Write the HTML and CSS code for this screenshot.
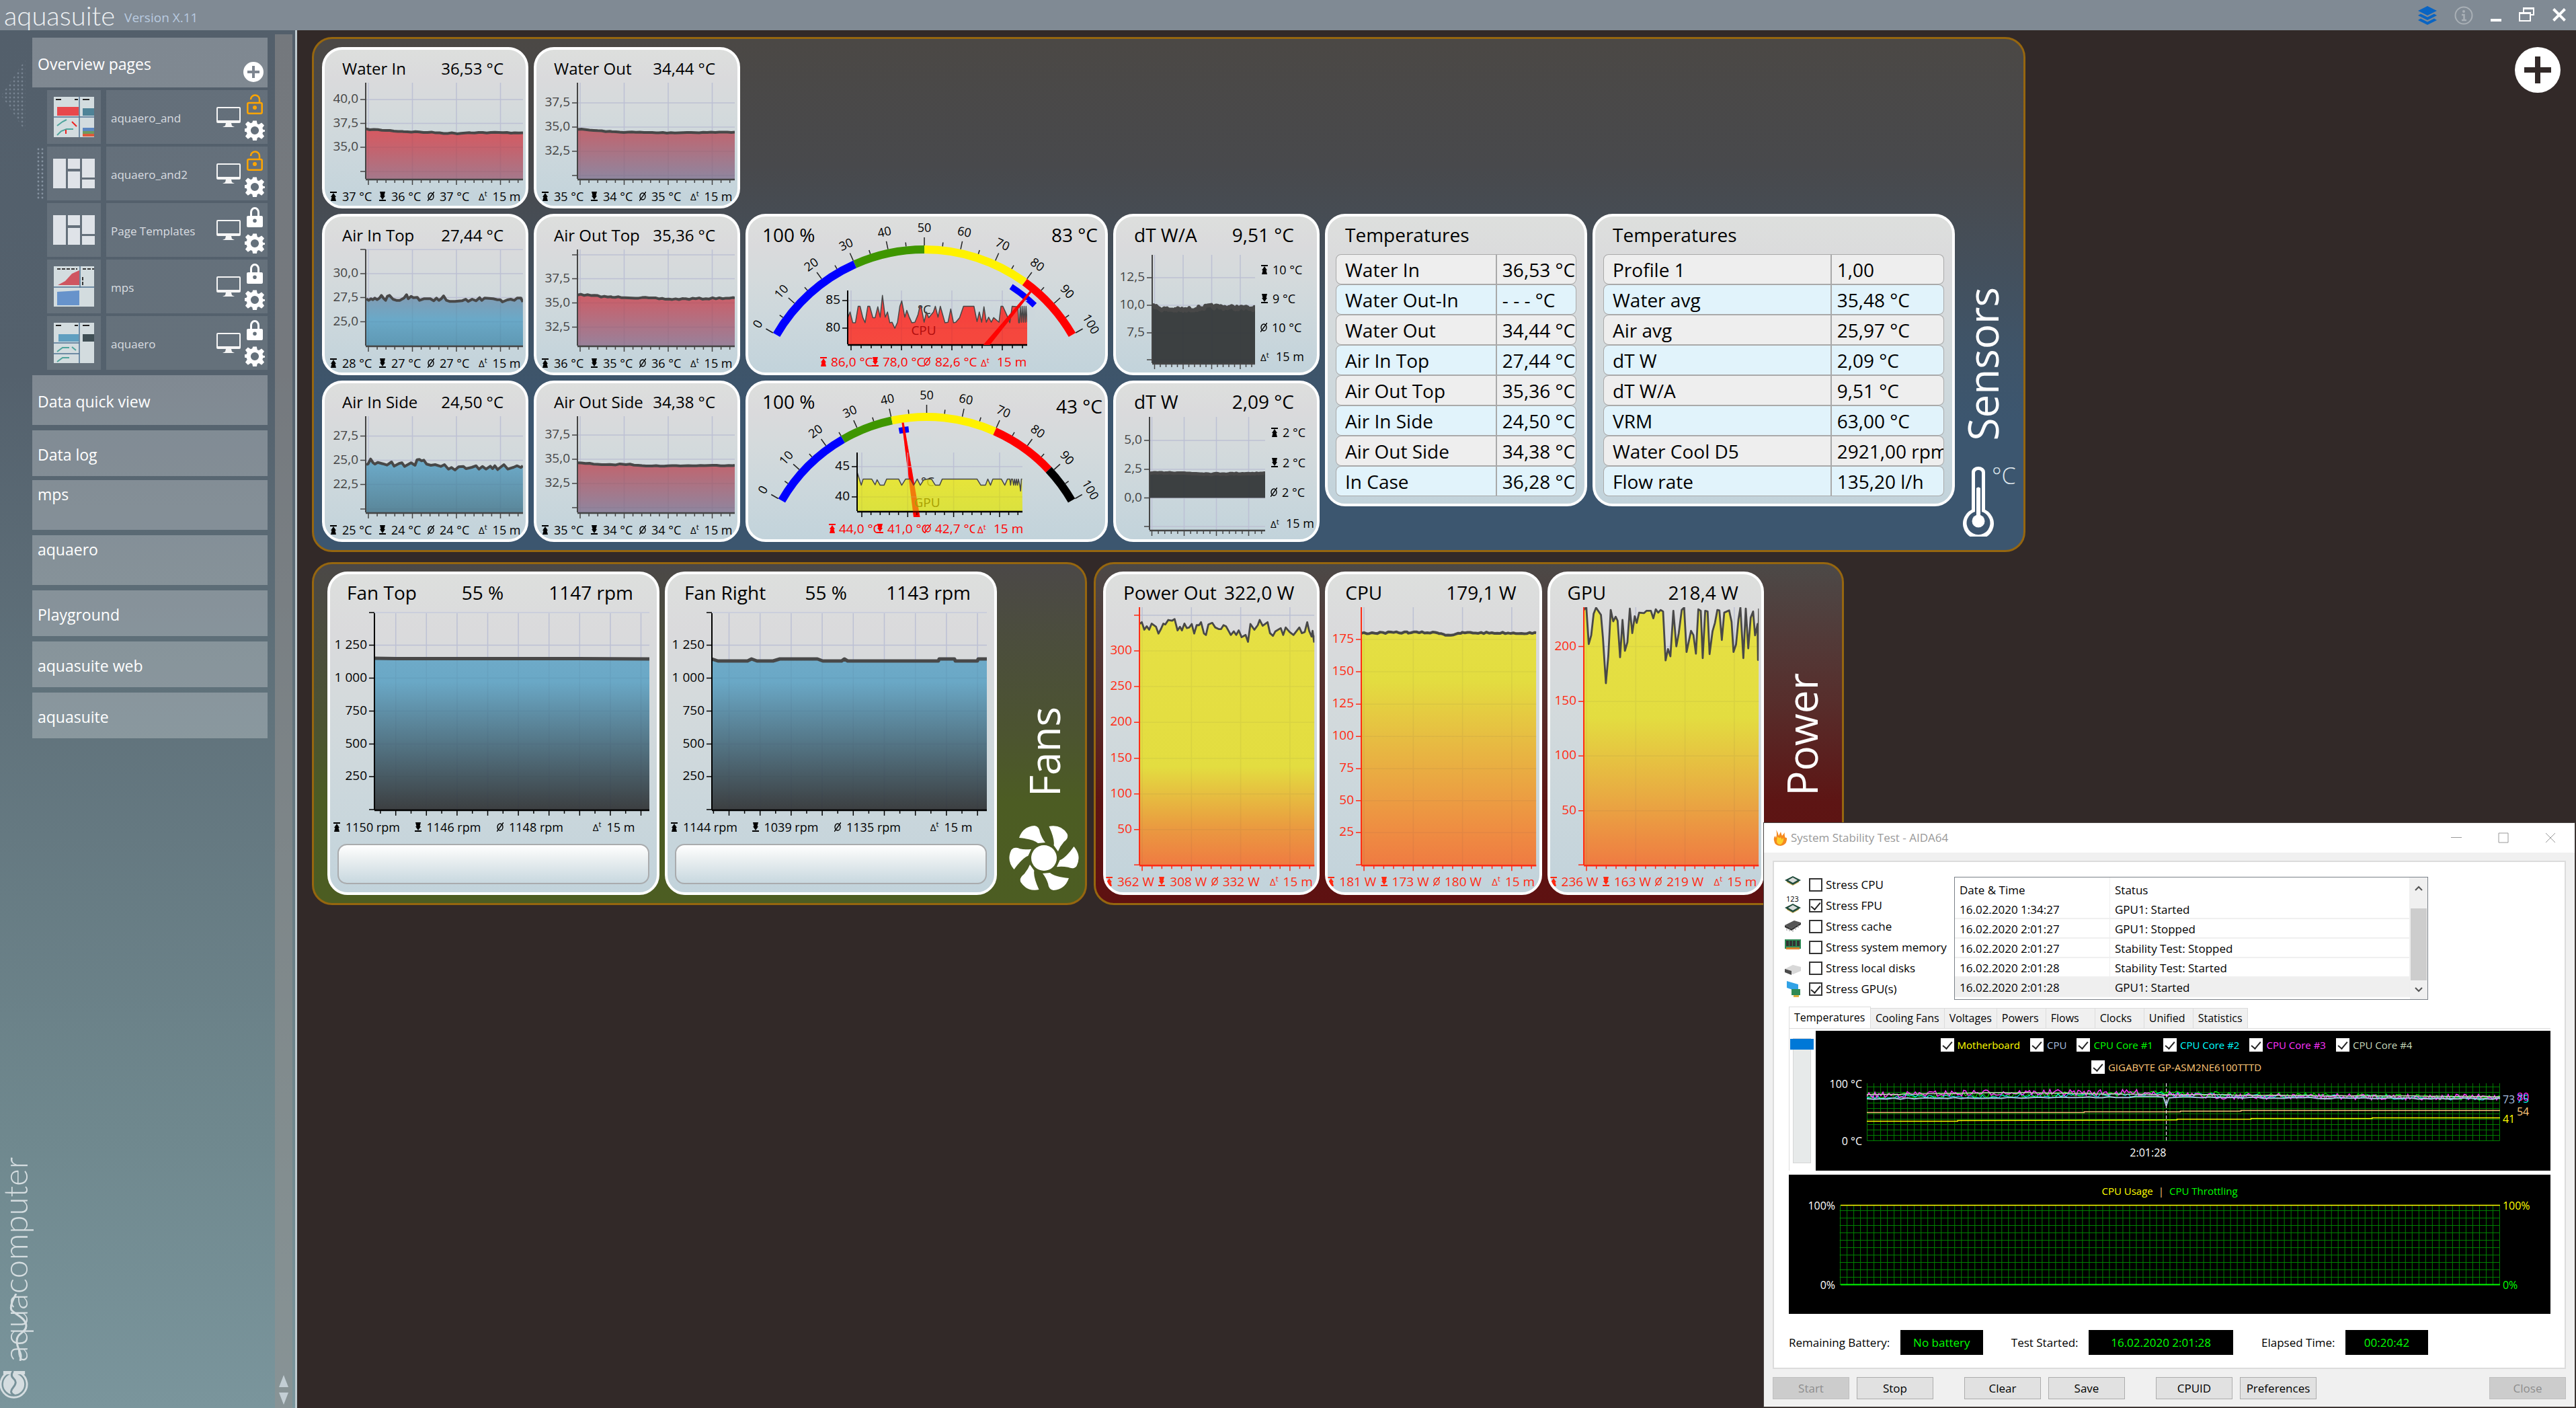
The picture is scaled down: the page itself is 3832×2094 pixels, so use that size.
FILE: index.html
```html
<!DOCTYPE html>
<html lang="en">
<head>
<meta charset="utf-8">
<title>aquasuite X.11</title>
<link rel="stylesheet" href="styles.css">
</head>
<body>
<svg class="defs" aria-hidden="true">
  <defs>
    <symbol id="i-max" viewBox="0 0 10 14"><path d="M0 0h10v2H0zM5 2l4 6H7.500l1.500 6h-8l1.500-6H1z"/></symbol>
    <symbol id="i-min" viewBox="0 0 10 14"><path d="M0 12h10v2H0zM1 0h8L7.500 6H9l-4 6-4-6h1.500z"/></symbol>
    <symbol id="i-avg" viewBox="0 0 10 14"><ellipse cx="5" cy="7" rx="4" ry="5" fill="none" stroke="currentColor" stroke-width="1.400"/><path d="M0 14L10 0" stroke="currentColor" stroke-width="1.400"/></symbol>
    <symbol id="i-gear" viewBox="-16 -16 32 32">
      <path fill-rule="evenodd" d="M-3-15.500h6l1 5 2.500 1 4.300-2.900 4.200 4.300-2.900 4.100 1 2.600 5 .9v-2 4l-5 1-1 2.500 2.900 4.300-4.200 4.200-4.300-2.900-2.500 1-1 5h-6l-1-5-2.500-1-4.300 2.900-4.200-4.200 2.900-4.300-1-2.500-5-1v-4l5-1 1-2.500-2.900-4.200 4.200-4.300 4.300 2.900 2.500-1zM0-6.500a6.500 6.500 0 1 0 0 13 6.500 6.500 0 1 0 0-13z"/>
    </symbol>
    <symbol id="i-screen" viewBox="0 0 36 30"><path fill-rule="evenodd" d="M2 0h32q2 0 2 2v20q0 2-2 2H2q-2 0-2-2V2q0-2 2-2zM2 2v18h32V2zM14 24h8l1 4 4 2H9l4-2z"/></symbol>
    <symbol id="i-locked" viewBox="0 0 24 30"><path fill-rule="evenodd" d="M5 13V8a7 8 0 0 1 14 0v5h3q2 0 2 2v13q0 2-2 2H2q-2 0-2-2V15q0-2 2-2zM8 13h8V8a4 5 0 0 0-8 0zM12 17.500a2.800 2.800 0 1 0 0 5.600 2.800 2.800 0 1 0 0-5.600z"/></symbol>
    <symbol id="i-open" viewBox="0 0 24 30"><path d="M6 8a6.500 6.500 0 0 1 13 0v6" fill="none" stroke="currentColor" stroke-width="2.500"/><rect x="1.300" y="13" width="21.400" height="15.700" rx="2" fill="none" stroke="currentColor" stroke-width="2.500"/><circle cx="12" cy="20" r="3"/></symbol>
    <symbol id="i-tiles" viewBox="0 0 62 44"><path d="M0 0h19v44H0zM22 0h18v15H22zM22 19h18v25H22zM43 0h19v28H43zM43 31h19v13H43z"/></symbol>
    <symbol id="i-chip" viewBox="0 0 24 14"><path d="M3 7l9 6 9-6v2l-9 5-9-5z" fill="#c9a646"/><path d="M0 6l12-6 12 6-12 7z" fill="#1f4a3a"/><path d="M5 6l7-4 7 4-7 4z" fill="#d8dcda"/></symbol>
  </defs>
</svg>

<header class="topbar">
  <h1 class="brand">aquasuite</h1>
  <span class="version">Version X.11</span>
  <div class="window-tools">
    <button aria-label="Layers"><svg width="28" height="28" viewBox="0 0 28 28" fill="#0a64c2"><path d="M14 0l14 7-14 7L0 7zM4 11.500l10 5 10-5 4 2.500-14 7L0 14zM4 18.500l10 5 10-5 4 2.500-14 7L0 21z"/></svg></button>
    <button aria-label="Info"><svg width="28" height="28" viewBox="0 0 28 28" fill="none" stroke="#a9b0b6" stroke-width="2"><circle cx="14" cy="14" r="12.500"/><circle cx="14" cy="8" r="1" fill="#a9b0b6"/><path d="M11 13h3.500v7.500M11 21h7" stroke-width="2.500"/></svg></button>
    <button aria-label="Minimize"><svg width="16" height="28" viewBox="0 0 16 28" fill="#fff"><path d="M0 19h16v4H0z"/></svg></button>
    <button aria-label="Restore"><svg width="24" height="28" viewBox="0 0 24 28" fill="none" stroke="#fff" stroke-width="2"><path d="M7 9V3h15v10h-5M7 4h15"/><path d="M1 10h16v12H1zM1 11h16"/></svg></button>
    <button aria-label="Close"><svg width="20" height="28" viewBox="0 0 20 28" fill="none" stroke="#fff" stroke-width="4"><path d="M1.500 4.500l17 17M18.500 4.500l-17 17"/></svg></button>
  </div>
</header>

<div class="workspace">
  <aside class="sidebar">
    <div class="gutter">
      <svg class="collapse" viewBox="0 0 38 108" aria-hidden="true">
        <defs><pattern id="dots" width="6" height="6" patternUnits="userSpaceOnUse"><circle cx="3" cy="3" r="1.400" fill="#8592a0"/></pattern></defs>
        <path d="M38 0v108L2 54z" fill="url(#dots)"/>
      </svg>
      <div class="maker">
        <svg viewBox="0 0 44 44" aria-hidden="true"><path d="M10 3.500a20 20 0 1 0 22 0" fill="none" stroke="#d5dde0" stroke-width="3"/><circle cx="21" cy="20" r="16" fill="#d5dde0"/><path d="M5 0h33v5H5z" fill="#d5dde0"/><path d="M20 0q-5 7 1 12t-1 13 2 12" fill="none" stroke="#78929a" stroke-width="3"/></svg>
        <span>aquacomputer</span>
        <svg class="wave" viewBox="0 0 44 100" aria-hidden="true"><path d="M24 0Q14 18 17 24c4 6 22 12 22 24 0 10-14 10-14 22 0 14 9 16 5 30" fill="none" stroke="#d5dde0" stroke-width="3"/></svg>
      </div>
    </div>
    <nav class="menu">
      <div class="entry tall">
        <a href="#overview">Overview pages</a>
        <button class="add-page" aria-label="Add page"><svg viewBox="0 0 30 30"><circle cx="15" cy="15" r="15" fill="#fff"/><path d="M15 6v18M6 15h18" stroke="#7e8690" stroke-width="4"/></svg></button>
      </div>
      <ul class="pages">
        <li>
          <span class="thumb"><svg viewBox="0 0 60 60"><path d="M0 0h60v60H0z" fill="#d3dcdf"/><path d="M5 15h32v13H5z" fill="#e8474c"/><path d="M43 17h17v11H43z" fill="#4f8397"/><path d="M38 0v60M0 30h60" stroke="#4f7292" stroke-width="1.500"/><path d="M43 46h17v6H43z" fill="#5b86c0"/><path d="M43 51h17v4H43z" fill="#6f9a5e"/><path d="M43 55h17v4H43z" fill="#dd5a3c"/><path d="M5 43l8-6 6-3M5 57l6-6 8-3h10" fill="none" stroke="#4fa49c" stroke-width="2"/><path d="M27 37l7 7M18 49v6" stroke="#e22" stroke-width="2"/><path d="M3 4h8M31 4h5M43 4h10" stroke="#222" stroke-width="2"/></svg></span>
          <span class="page"><a href="#p1">aquaero_and</a><svg class="screen"><use href="#i-screen"/></svg><span class="tools"><button class="unlocked" aria-label="Lock page"><svg width="24" height="30"><use href="#i-open"/></svg></button><button aria-label="Page settings"><svg width="30" height="30"><use href="#i-gear"/></svg></button></span></span>
        </li>
        <li>
          <svg class="grip" viewBox="0 0 12 78" aria-hidden="true"><path d="M0 0h12v78H0z" fill="url(#dots)"/></svg>
          <span class="thumb"><svg class="tiles"><use href="#i-tiles"/></svg></span>
          <span class="page"><a href="#p2">aquaero_and2</a><svg class="screen"><use href="#i-screen"/></svg><span class="tools"><button class="unlocked" aria-label="Lock page"><svg width="24" height="30"><use href="#i-open"/></svg></button><button aria-label="Page settings"><svg width="30" height="30"><use href="#i-gear"/></svg></button></span></span>
        </li>
        <li>
          <span class="thumb"><svg class="tiles"><use href="#i-tiles"/></svg></span>
          <span class="page"><a href="#p3">Page Templates</a><svg class="screen"><use href="#i-screen"/></svg><span class="tools"><button aria-label="Unlock page"><svg width="24" height="30"><use href="#i-locked"/></svg></button><button aria-label="Page settings"><svg width="30" height="30"><use href="#i-gear"/></svg></button></span></span>
        </li>
        <li>
          <span class="thumb"><svg viewBox="0 0 60 60"><path d="M0 0h60v60H0z" fill="#d3dcdf"/><path d="M6 28l11-6 10-11 11-5v22z" fill="#cf5560"/><path d="M5 38l33-2v22H5z" fill="#6793cb"/><path d="M39 0v32M0 31h60" stroke="#4f7292" stroke-width="1.500"/><path d="M5 4h30M43 4h17M43 16v12" stroke="#333" stroke-width="2" stroke-dasharray="5 2"/></svg></span>
          <span class="page"><a href="#p4">mps</a><svg class="screen"><use href="#i-screen"/></svg><span class="tools"><button aria-label="Unlock page"><svg width="24" height="30"><use href="#i-locked"/></svg></button><button aria-label="Page settings"><svg width="30" height="30"><use href="#i-gear"/></svg></button></span></span>
        </li>
        <li>
          <span class="thumb"><svg viewBox="0 0 60 60"><path d="M0 0h60v60H0z" fill="#d3dcdf"/><path d="M7 17h30v11H7z" fill="#5f9fc0"/><path d="M43 17h17v11H43z" fill="#3f4f55"/><path d="M38 0v60M0 30h38M0 46h38" stroke="#4f7292" stroke-width="1.500"/><path d="M5 43l8-6h10M27 36l6 5M5 58l8-6h10" fill="none" stroke="#4fa49c" stroke-width="2"/><path d="M3 4h8M31 4h5M43 4h10" stroke="#222" stroke-width="2"/></svg></span>
          <span class="page"><a href="#p5">aquaero</a><svg class="screen"><use href="#i-screen"/></svg><span class="tools"><button aria-label="Unlock page"><svg width="24" height="30"><use href="#i-locked"/></svg></button><button aria-label="Page settings"><svg width="30" height="30"><use href="#i-gear"/></svg></button></span></span>
        </li>
      </ul>
      <div class="entry tall"><a href="#quick">Data quick view</a></div>
      <div class="entry"><a href="#log">Data log</a></div>
      <div class="entry device"><a href="#mps">mps</a></div>
      <div class="entry device"><a href="#aquaero">aquaero</a></div>
      <div class="entry"><a href="#playground">Playground</a></div>
      <div class="entry"><a href="#web">aquasuite web</a></div>
      <div class="entry"><a href="#suite">aquasuite</a></div>
    </nav>
    <div class="scroller"><svg viewBox="0 0 14 44" aria-hidden="true"><path d="M7 0l7 18H0zM0 26h14L7 44z" fill="#c3ced4"/></svg></div>
  </aside>

  <main class="board">
    <button class="add-widget" aria-label="Add element"><svg viewBox="0 0 68 68"><circle cx="34" cy="34" r="34" fill="#fff"/><path d="M34 14v40M14 34h40" stroke="#322928" stroke-width="8"/></svg></button>

    <div class="row row-top">
      <section class="panel sensors">
        <article class="card small"><h3><span>Water In</span><b>36,53 °C</b></h3><svg class="chart" data-chart="waterIn"></svg><p class="stats"><span data-i="max">37 °C</span><span data-i="min">36 °C</span><span data-i="avg">37 °C</span><span data-i="dt">15 m</span></p></article>
        <article class="card small"><h3><span>Water Out</span><b>34,44 °C</b></h3><svg class="chart" data-chart="waterOut"></svg><p class="stats"><span data-i="max">35 °C</span><span data-i="min">34 °C</span><span data-i="avg">35 °C</span><span data-i="dt">15 m</span></p></article>
        <article class="card small first"><h3><span>Air In Top</span><b>27,44 °C</b></h3><svg class="chart" data-chart="airInTop"></svg><p class="stats"><span data-i="max">28 °C</span><span data-i="min">27 °C</span><span data-i="avg">27 °C</span><span data-i="dt">15 m</span></p></article>
        <article class="card small"><h3><span>Air Out Top</span><b>35,36 °C</b></h3><svg class="chart" data-chart="airOutTop"></svg><p class="stats"><span data-i="max">36 °C</span><span data-i="min">35 °C</span><span data-i="avg">36 °C</span><span data-i="dt">15 m</span></p></article>
        <article class="card"><svg class="chart" data-gauge="cpu"></svg></article>
        <article class="card"><h3><span>dT W/A</span><b>9,51 °C</b></h3><svg class="chart" data-chart="dtwa"></svg></article>
        <article class="card list temps">
          <h3><span>Temperatures</span></h3>
          <table class="readings narrow">
            <tr><th scope="row">Water In</th><td>36,53 °C</td></tr>
            <tr><th scope="row">Water Out-In</th><td>- - - °C</td></tr>
            <tr><th scope="row">Water Out</th><td>34,44 °C</td></tr>
            <tr><th scope="row">Air In Top</th><td>27,44 °C</td></tr>
            <tr><th scope="row">Air Out Top</th><td>35,36 °C</td></tr>
            <tr><th scope="row">Air In Side</th><td>24,50 °C</td></tr>
            <tr><th scope="row">Air Out Side</th><td>34,38 °C</td></tr>
            <tr><th scope="row">In Case</th><td>36,28 °C</td></tr>
          </table>
        </article>
        <article class="card list values">
          <h3><span>Temperatures</span></h3>
          <table class="readings">
            <tr><th scope="row">Profile 1</th><td>1,00</td></tr>
            <tr><th scope="row">Water avg</th><td>35,48 °C</td></tr>
            <tr><th scope="row">Air avg</th><td>25,97 °C</td></tr>
            <tr><th scope="row">dT W</th><td>2,09 °C</td></tr>
            <tr><th scope="row">dT W/A</th><td>9,51 °C</td></tr>
            <tr><th scope="row">VRM</th><td>63,00 °C</td></tr>
            <tr><th scope="row">Water Cool D5</th><td>2921,00 rpm</td></tr>
            <tr><th scope="row">Flow rate</th><td>135,20 l/h</td></tr>
          </table>
        </article>
        <div class="side">
          <h2>Sensors</h2>
          <svg class="thermo" viewBox="0 0 80 106" aria-hidden="true"><path d="M13 66V10a10 8 0 0 1 20 0v56a23 23 0 1 1-20 0z" fill="#fff"/><path d="M18 69V11a5 4 0 0 1 10 0v58a17.500 17.500 0 1 1-10 0z" fill="#3c556f"/><circle cx="23" cy="83" r="9.500" fill="#fff"/><path d="M20 34q3-3 6 0v45h-6z" fill="#fff"/><text x="43" y="28">°C</text></svg>
        </div>
        <article class="card small first"><h3><span>Air In Side</span><b>24,50 °C</b></h3><svg class="chart" data-chart="airInSide"></svg><p class="stats"><span data-i="max">25 °C</span><span data-i="min">24 °C</span><span data-i="avg">24 °C</span><span data-i="dt">15 m</span></p></article>
        <article class="card small"><h3><span>Air Out Side</span><b>34,38 °C</b></h3><svg class="chart" data-chart="airOutSide"></svg><p class="stats"><span data-i="max">35 °C</span><span data-i="min">34 °C</span><span data-i="avg">34 °C</span><span data-i="dt">15 m</span></p></article>
        <article class="card"><svg class="chart" data-gauge="gpu"></svg></article>
        <article class="card"><h3><span>dT W</span><b>2,09 °C</b></h3><svg class="chart" data-chart="dtw"></svg></article>
      </section>
    </div>

    <div class="row row-bottom">
      <section class="panel fans">
        <article class="card fan"><h3><span>Fan Top</span><b>55 %</b><b>1147 rpm</b></h3><svg class="chart" data-chart="fanTop"></svg><p class="stats"><span data-i="max">1150 rpm</span><span data-i="min">1146 rpm</span><span data-i="avg">1148 rpm</span><span data-i="dt">15 m</span></p><button class="blank" aria-label="Fan Top profile"></button></article>
        <article class="card fan"><h3><span>Fan Right</span><b>55 %</b><b>1143 rpm</b></h3><svg class="chart" data-chart="fanRight"></svg><p class="stats"><span data-i="max">1144 rpm</span><span data-i="min">1039 rpm</span><span data-i="avg">1135 rpm</span><span data-i="dt">15 m</span></p><button class="blank" aria-label="Fan Right profile"></button></article>
        <div class="side">
          <h2>Fans</h2>
          <svg class="rotor" viewBox="-53 -50 106 100" fill="#fff" aria-hidden="true">
            <defs><path id="blade" d="M-37-30Q-31-47-14-48-7-47-6-38-3-29 2-23L-9-22Q-16-28-37-30z"/></defs>
            <circle r="19"/><use href="#blade"/><use href="#blade" transform="rotate(60)"/><use href="#blade" transform="rotate(120)"/><use href="#blade" transform="rotate(180)"/><use href="#blade" transform="rotate(240)"/><use href="#blade" transform="rotate(300)"/>
          </svg>
        </div>
      </section>
      <section class="panel power">
        <article class="card watt"><h3><span>Power Out</span><b>322,0 W</b></h3><svg class="chart" data-chart="powerOut"></svg><p class="stats"><span data-i="max">362 W</span><span data-i="min">308 W</span><span data-i="avg">332 W</span><span data-i="dt">15 m</span></p></article>
        <article class="card watt"><h3><span>CPU</span><b>179,1 W</b></h3><svg class="chart" data-chart="powerCpu"></svg><p class="stats"><span data-i="max">181 W</span><span data-i="min">173 W</span><span data-i="avg">180 W</span><span data-i="dt">15 m</span></p></article>
        <article class="card watt"><h3><span>GPU</span><b>218,4 W</b></h3><svg class="chart" data-chart="powerGpu"></svg><p class="stats"><span data-i="max">236 W</span><span data-i="min">163 W</span><span data-i="avg">219 W</span><span data-i="dt">15 m</span></p></article>
        <div class="side"><h2>Power</h2></div>
      </section>
    </div>
  </main>
</div>

<section class="dialog" aria-label="System Stability Test">
  <header class="caption">
    <svg width="20" height="24" viewBox="0 0 20 24" aria-hidden="true"><path d="M4 0q3 4 4 9l3-6q1 4 2 6l4-5q-1 5 1 8 3-1 2 3-1 8-9 9-9 0-10-8-1-5 2-7 0 2 1 3Q6 6 4 0z" fill="#f58a1f"/><path d="M6 10q4 4 4 1 3 2 2 4l3-3q1 6-4 10-6 0-6-5z" fill="#fbd02a"/></svg>
    <h2>System Stability Test - AIDA64</h2>
    <button aria-label="Minimize"><svg width="16" height="16" viewBox="0 0 16 16"><path d="M0 7.500h16"/></svg></button>
    <button aria-label="Maximize"><svg width="16" height="16" viewBox="0 0 16 16"><path d="M1 1h14v14H1z"/></svg></button>
    <button aria-label="Close"><svg width="16" height="16" viewBox="0 0 16 16"><path d="M1 1l14 14M15 1L1 15"/></svg></button>
  </header>
  <div class="sheet">
    <div class="setup">
      <div class="checks">
        <label><svg viewBox="0 0 24 24"><use href="#i-chip" y="-2" height="16"/></svg><input type="checkbox">Stress CPU</label>
        <label><svg viewBox="0 0 24 24"><text x="2" y="6">123</text><use href="#i-chip" y="9" height="14"/></svg><input type="checkbox" checked>Stress FPU</label>
        <label><svg viewBox="0 0 24 24"><path d="M0 10l14-7 10 3-14 9z" fill="#555"/><path d="M0 10l10 5 14-9v3l-14 9-10-5z" fill="#333"/><path d="M3 14v4M7 15v4M12 16v4M16 13v4M20 10v4" stroke="#999"/></svg><input type="checkbox">Stress cache</label>
        <label><svg viewBox="0 0 24 24"><path d="M0 0h24v14H0z" fill="#2f8a55"/><path d="M2 2h4v8H2zM7 2h4v8H7zM12 2h4v8h-4zM18 2h4v8h-4z" fill="#333"/><path d="M2 12h20v3H2z" fill="#d9822b"/></svg><input type="checkbox">Stress system memory</label>
        <label><svg viewBox="0 0 24 24"><path d="M0 13l12-6 12 3v6l-12 5-12-4z" fill="#d8d8d8"/><path d="M0 13l10 3v6L0 18z" fill="#4b4b4b"/></svg><input type="checkbox">Stress local disks</label>
        <label><svg viewBox="0 0 24 24"><path d="M3 0l17 5v11L3 10z" fill="#31a2e6"/><path d="M10 12h13v9H10z" fill="#2f8a55"/><path d="M13 21h8v3h-8z" fill="#e0b040"/></svg><input type="checkbox" checked>Stress GPU(s)</label>
      </div>
      <div class="log">
        <table>
          <thead><tr><th>Date &amp; Time</th><th>Status</th></tr></thead>
          <tbody>
            <tr><td>16.02.2020 1:34:27</td><td>GPU1: Started</td></tr>
            <tr><td>16.02.2020 2:01:27</td><td>GPU1: Stopped</td></tr>
            <tr><td>16.02.2020 2:01:27</td><td>Stability Test: Stopped</td></tr>
            <tr><td>16.02.2020 2:01:28</td><td>Stability Test: Started</td></tr>
            <tr class="current"><td>16.02.2020 2:01:28</td><td>GPU1: Started</td></tr>
          </tbody>
        </table>
        <div class="bar"><svg viewBox="0 0 12 8"><path d="M1 7l5-5 5 5"/></svg><i></i><svg viewBox="0 0 12 8"><path d="M1 1l5 5 5-5"/></svg></div>
      </div>
    </div>
    <div class="tabs"><button class="on">Temperatures</button><button>Cooling Fans</button><button>Voltages</button><button>Powers</button><button>Flows</button><button>Clocks</button><button>Unified</button><button>Statistics</button></div>
    <div class="monitor">
      <input class="zoomer" type="range" aria-label="Time scale" value="0">
      <div class="scope">
        <div class="legend">
          <label class="c-yellow"><input type="checkbox" checked>Motherboard</label>
          <label class="c-steel"><input type="checkbox" checked>CPU</label>
          <label class="c-green"><input type="checkbox" checked>CPU Core #1</label>
          <label class="c-cyan"><input type="checkbox" checked>CPU Core #2</label>
          <label class="c-magenta"><input type="checkbox" checked>CPU Core #3</label>
          <label class="c-pale"><input type="checkbox" checked>CPU Core #4</label>
        </div>
        <div class="legend"><label class="c-sand"><input type="checkbox" checked>GIGABYTE GP-ASM2NE6100TTTD</label></div>
        <svg id="temps" viewBox="2701 1604 1092 137"></svg>
      </div>
    </div>
    <div class="scope usage">
      <p><span class="c-yellow">CPU Usage</span><span class="c-sand">|</span><span class="c-green">CPU Throttling</span></p>
      <svg id="usage" viewBox="2661 1784 1132 171"></svg>
    </div>
    <dl class="facts">
      <dt>Remaining Battery:</dt><dd>No battery</dd>
      <dt>Test Started:</dt><dd class="wide">16.02.2020 2:01:28</dd>
      <dt>Elapsed Time:</dt><dd>00:20:42</dd>
    </dl>
  </div>
  <footer class="actions">
    <button disabled>Start</button><button>Stop</button>
    <button class="apart">Clear</button><button>Save</button>
    <button class="apart">CPUID</button><button>Preferences</button>
    <button class="last" disabled>Close</button>
  </footer>
</section>
<script src="charts.js"></script>
</body>
</html>
```
FILE: styles.css
```css
* { box-sizing: border-box; }
html, body { margin: 0; }
body {
  min-height: 100vh;
  font-family: "Open Sans", "Noto Sans", sans-serif;
  background: #322928;
  color: #000;
  display: flex;
  flex-direction: column;
  position: relative;
  overflow-x: hidden;
}
h1, h2, h3, p, ul, dl, dd { margin: 0; padding: 0; font-weight: 400; }
b { font-weight: 400; }
button { font: inherit; border: 0; padding: 0; background: none; color: inherit; }
a { color: inherit; text-decoration: none; }
svg { display: block; }
.defs { position: absolute; width: 0; height: 0; }

/* title bar */
.topbar { height: 45px; background: #808a94; display: flex; align-items: center; padding: 0 15px 0 6px; }
.brand { font-family: Lato, "Open Sans", sans-serif; font-weight: 300; font-size: 40px; line-height: 40px; color: #eef1f3; }
.version { margin: 0 auto 0 14px; padding-top: 6px; font-size: 19px; line-height: 32px; color: #b9cbe0; }
.window-tools { display: flex; gap: 26px; align-items: center; }

.workspace { flex: 1; display: flex; }

/* sidebar */
.sidebar { flex: none; width: 442px; display: flex; background: linear-gradient(#535f6b, #54616d 25%, #61737c 50%, #6f888e 80%, #7a959c); border-right: 3px solid #bfcacf; }
.gutter { width: 48px; display: flex; flex-direction: column; justify-content: space-between; padding: 43px 0 12px; }
.collapse { width: 38px; opacity: .7; }
.maker { position: relative; display: flex; flex-direction: column-reverse; align-items: flex-start; justify-content: flex-start; gap: 14px; width: 44px; }
.maker svg { width: 43px; order: -1; }
.maker .wave { position: absolute; left: 0; bottom: 58px; width: 44px; }
.maker span { writing-mode: vertical-rl; transform: rotate(180deg); font-family: Lato, "Open Sans", sans-serif; font-weight: 300; font-size: 49px; line-height: 44px; color: #d5dde0; }
.menu { width: 350px; padding-top: 11px; color: #fff; font-size: 23px; line-height: 32px; }
.entry { position: relative; height: 68px; margin-bottom: 8px; padding: 20px 8px 0; background: #ffffff42; }
.entry.tall { height: 74px; padding-top: 23px; }
.entry.tall:first-child { margin-bottom: 4px; }
.entry.device { height: 74px; padding-top: 5px; }
.entry:has(+ .device):not(.device) { margin-bottom: 6px; }
.add-page { position: absolute; right: 6px; bottom: 8px; width: 30px; height: 30px; }
.pages { list-style: none; padding-left: 22px; margin-bottom: 8px; font-size: 17px; display: grid; gap: 4px; }
.pages li { display: flex; gap: 8px; height: 80px; position: relative; }
.grip { position: absolute; left: -16px; top: 1px; width: 12px; }
.thumb { width: 80px; background: #ffffff1a; display: flex; align-items: center; justify-content: center; }
.thumb svg { width: 60px; height: 60px; }
.thumb .tiles { width: 62px; height: 44px; fill: #dfe3e8; }
.page { flex: 1; background: #ffffff1a; display: flex; align-items: center; padding: 0 4px 0 7px; color: #d9dde1; }
.page a { flex: 1; padding-top: 3px; white-space: nowrap; }
.screen { width: 36px; height: 30px; margin-right: 6px; fill: #f5f5f5; }
.tools { display: flex; flex-direction: column; align-items: center; gap: 9px; width: 30px; color: #fff; }
.tools svg { fill: currentColor; }
.unlocked { color: #ffa500; }
.scroller { width: 26px; margin: 6px 4px 0 11px; background: #96918f80; display: flex; align-items: flex-end; justify-content: center; padding-bottom: 5px; }
.scroller svg { width: 14px; }

/* dashboard */
.board { flex: 1; min-width: 0; position: relative; padding: 10px 0 0 22px; }
.add-widget { position: absolute; right: 23px; top: 25px; width: 68px; height: 68px; }
.row { display: grid; column-gap: 10px; margin-bottom: 15px; }
.row-top { grid-template-columns: minmax(0, 2549fr) minmax(0, 809fr); }
.row-bottom { grid-template-columns: minmax(0, 1153fr) minmax(0, 1116fr) minmax(0, 1079fr); }
.panel { display: grid; gap: 8px; border: 3px solid #96660f; border-radius: 30px; padding: 12px; }
.sensors { grid-template-columns: 307fr 307fr 539fr 307fr 390fr 539fr 94fr; padding-right: 0; background: linear-gradient(#4b4845, #48494c 25%, #454e58 40%, #3f5468 60%, #3c566f 75%); }
.sensors .first { grid-column: 1; }
.sensors .temps { grid-area: 2 / 5 / span 2; }
.sensors .values { grid-area: 2 / 6 / span 2; }
.sensors .side { grid-area: 2 / 7 / span 2; }
.fans { grid-template-columns: 494fr 494fr 123fr; padding: 11px 0 12px 20px; background: linear-gradient(#4b4847, #4c5430 50%, #4c5c23 70%, #4c5d22); }
.power { grid-template-columns: 322fr 322fr 322fr 108fr; padding: 11px 0 12px 11px; background: linear-gradient(#4c4947, #572e2c 40%, #5d1514 70%, #5e1111); }

.card {
  min-width: 0; overflow: hidden; border: 4px solid #fff; border-radius: 30px;
  background: linear-gradient(#dddfdd, #dadadc 18%, #d4dadc 40%, #cbd7dc 70%, #c2d3db);
}
.card h3 { display: flex; justify-content: space-between; height: 45px; padding: 9px 34px 0 27px; font-size: 28px; line-height: 36px; white-space: nowrap; }
.card.small h3 { height: 44px; padding: 12px 33px 0 26px; font-size: 24px; line-height: 32px; }
.card.list { align-self: start; padding: 0 12px 11px; }
.card.list h3 { height: 56px; padding-left: 14px; }
.card.fan h3 { padding: 9px 35px 0 25px; height: 50px; }
.card.watt h3 { padding: 9px 34px 0 26px; height: 46px; }
.chart { width: 100%; height: auto; overflow: hidden; }
.chart text { font-size: 19px; }
.chart .big { font-size: 28px; }
.chart .scale { font-size: 18px; }

.stats { display: grid; grid-template-columns: 73fr 72fr 76fr 70fr; padding-left: 8px; font-size: 18px; line-height: 28px; white-space: nowrap; }
.stats span { display: flex; align-items: center; gap: 8px; }
.stats svg { flex: none; width: 10px; height: 14px; fill: currentColor; }
.stats em { font-style: normal; font-size: 15px; }
.stats sup { font-size: 11px; line-height: 1; }
.fan .stats { grid-template-columns: 119fr 121fr 141fr 94fr; padding-left: 5px; }
.watt .stats { grid-template-columns: 78fr 78fr 87fr 70fr; padding-left: 0; font-size: 19px; line-height: 28px; color: #ff2a12; }
.watt .stats span { gap: 7px; }
.blank { display: block; width: calc(100% - 22px); height: 60px; margin: 11px 11px 12px; border: 2px solid #a9abad; border-radius: 14px; background: linear-gradient(#fff, #eef2f3 30%, #c8d8df); }

.readings { width: 100%; table-layout: fixed; border-collapse: separate; border-spacing: 0; font-size: 28px; line-height: 41px; }
.readings th, .readings td { height: 45px; padding: 2px 0 0 8px; border: solid #a9a9a9; border-width: 1px 1px 1px 0; font-weight: 400; text-align: left; white-space: nowrap; overflow: hidden; background: #eee; }
.readings th { width: 67%; padding-left: 13px; border-left-width: 1px; border-right-width: 2px; border-radius: 8px 0 0 8px; }
.readings td { border-radius: 0 8px 8px 0; }
.readings tr:nth-child(even) > * { background: #e1f3fb; }

.side { display: flex; flex-direction: column; align-items: center; color: #fff; }
.side h2 { writing-mode: vertical-rl; transform: rotate(180deg); font-size: 62px; line-height: 70px; }
.sensors .side { align-items: flex-start; justify-content: flex-end; padding: 0 0 8px 4px; }
.sensors .side h2 { margin: 0 0 36px -6px; }
.thermo { width: 80px; }
.thermo text { font-size: 34px; font-weight: 300; fill: #dfe6ec; }
.fans .side { justify-content: flex-end; padding-bottom: 5px; }
.fans .side h2 { margin-bottom: 41px; }
.rotor { width: 106px; }
.power .side { justify-content: flex-end; padding: 0 12px 147px 0; }

/* stability test window */
.dialog { position: absolute; right: 2px; bottom: 2px; width: 1206px; background: #f0f0f0; font-size: 17px; line-height: 24px; box-shadow: 0 0 0 1px #4a4442; }
.caption { display: flex; align-items: center; height: 44px; background: #fff; color: #999; padding: 0 28px 0 14px; }
.caption h2 { flex: 1; padding-left: 6px; font-size: 17px; }
.caption button { width: 16px; margin-left: 54px; }
.caption button path { fill: none; stroke: #999; }
.sheet { margin: 12px 13px 0; border: 2px solid #dcdcdc; background: #fff; padding: 22px 21px 19px 22px; }
.setup { display: flex; gap: 8px; padding-right: 182px; }
.checks { width: 238px; display: flex; flex-direction: column; gap: 7px; }
.checks label { display: flex; align-items: center; height: 24px; white-space: nowrap; }
.checks svg { width: 24px; height: 24px; margin-right: 12px; margin-left: -6px; overflow: visible; }
.checks text { font-size: 11px; }
input[type=checkbox] { appearance: none; flex: none; width: 20px; height: 20px; margin: 0 5px 0 0; border: 2px solid #333; background: #fff; display: flex; justify-content: center; }
input[type=checkbox]:checked::after { content: ""; width: 6px; height: 12px; border: solid #222; border-width: 0 2px 2px 0; transform: rotate(40deg); }
.log { flex: 1; height: 183px; border: 1px solid #7a8188; display: flex; overflow: hidden; }
.log table { flex: 1; align-self: flex-start; border-collapse: separate; border-spacing: 0; table-layout: fixed; }
.log th, .log td { height: 29px; padding: 3px 7px 0; font-weight: 400; text-align: left; border-right: 1px solid #eee; border-bottom: 2px solid #f0f0f0; line-height: 24px; }
.log th { height: 33px; padding-top: 6px; border-bottom: 0; }
.log th:first-child { width: 231px; }
.log .current td { background: #efefef; }
.log .bar { width: 26px; background: #f0f0f0; display: flex; flex-direction: column; align-items: center; padding: 12px 0 10px; }
.log .bar svg { width: 12px; fill: none; stroke: #555; stroke-width: 2; }
.log .bar i { width: 24px; height: 107px; margin: auto 0 10px; background: #cdcdcd; }
.tabs { display: flex; align-items: flex-end; margin-top: 10px; border-bottom: 1px solid #dcdcdc; font-size: 16px; }
.tabs button { height: 30px; min-width: 73px; padding: 0 7px; background: #f0f0f0; border: 1px solid #dcdcdc; border-bottom: 0; border-left: 0; text-align: left; }
.tabs .on { height: 32px; min-width: 122px; background: #fff; border-left: 1px solid #dcdcdc; }
.monitor { display: flex; border-left: 1px solid #dcdcdc; padding-top: 3px; margin-bottom: 6px; }
.zoomer { appearance: none; writing-mode: vertical-lr; width: 35px; height: 186px; margin: 11px 3px 0 1px; background: none; }
.zoomer::-webkit-slider-runnable-track { width: 27px; background: #e7eaea; border: 1px solid #d6d6d6; }
.zoomer::-webkit-slider-thumb { appearance: none; width: 35px; height: 16px; margin-left: -5px; background: #0078d7; }
.scope { flex: 1; background: #000; padding-top: 5px; }
.scope svg { width: 100%; overflow: hidden; }
.scope svg text { font-size: 16px; }
.legend { display: flex; justify-content: center; gap: 15px; height: 33px; align-items: center; font-size: 15px; padding-right: 20px; }
.legend label { display: flex; align-items: center; white-space: nowrap; }
.legend input[type=checkbox] { border-color: #fff; }
.usage { height: 207px; padding-top: 12px; }
.usage p { display: flex; justify-content: center; gap: 8px; height: 25px; font-size: 15px; }
.c-yellow { color: #ff0; } .c-steel { color: #a9c0e0; } .c-green { color: #0f0; } .c-cyan { color: #0ff; }
.c-magenta { color: #f3f; } .c-pale { color: #c5d8b8; } .c-sand { color: #ffc878; }
.facts { display: flex; align-items: center; margin-top: 24px; padding-right: 182px; line-height: 37px; white-space: nowrap; }
.facts dd { width: 123px; height: 37px; margin: 0 42px 0 auto; background: #000; color: #0f0; text-align: center; }
.facts .wide { width: 215px; }
.facts dd:last-child { margin-right: 0; }
.actions { display: flex; gap: 11px; padding: 12px 13px 11px; }
.actions button { width: 114px; height: 33px; border: 1px solid #adadad; background: #e1e1e1; }
.actions button:disabled { color: #8d8d8d; background: #ccc; border-color: #bfbfbf; }
.actions .apart { margin-left: 35px; }
.actions .last { margin-left: auto; }
```
FILE: charts.js
```js
// Small SVG chart kit for the dashboard widgets.
let seed = 7;
const rnd = () => (seed = (seed * 16807) % 2147483647) / 2147483647 - 0.5;

// Parse "x,y x,y" samples and scale them into chart space.
const scaled = (s, sx, sy, ox, oy) => s.split(' ').map(p => {
  const [x, y] = p.split(',').map(Number);
  return [ox + x / sx, oy + y / sy];
});

// Random walk between anchor points.
const drift = (anchors, amp, step) => {
  const out = [];
  for (let i = 0; i < anchors.length - 1; i++) {
    const [x0, y0] = anchors[i], [x1, y1] = anchors[i + 1];
    for (let x = x0; x < x1; x += step) out.push([x, y0 + (y1 - y0) * (x - x0) / (x1 - x0) + rnd() * amp]);
  }
  out.push(anchors[anchors.length - 1]);
  return out;
};
const pts = a => a.map(p => p[0].toFixed(1) + ',' + p[1].toFixed(1)).join(' ');
const icon = (n, x, y, c) => n === 'dt'
  ? `<text x="${x}" y="${y}" fill="${c}" style="font-size:15px">Δ<tspan dy="-5" style="font-size:11px">t</tspan></text>`
  : `<use href="#i-${n}" x="${x}" y="${y - 14}" width="10" height="14" fill="${c}" color="${c}"/>`;

let uid = 0;
function plot(c) {
  const id = 'g' + uid++, [x0, y0, x1, y1] = c.plot, ax = c.axis || '#444', base = c.base || y1;
  let s = `<defs><linearGradient id="${id}" gradientUnits="userSpaceOnUse" x1="0" x2="0" y1="${c.gy || y0}" y2="${base}">` +
    c.fill.map(([o, col]) => `<stop offset="${o}" stop-color="${col}"/>`).join('') +
    `</linearGradient><clipPath id="c${id}"><rect x="${x0}" y="${y0}" width="${x1 - x0}" height="${y1 - y0 + 2}"/></clipPath></defs>`;
  let grid = '';
  c.y.forEach(([y]) => grid += `M${x0} ${y}H${x1}`);
  for (let x = c.major; x < x1; x += c.step) grid += `M${x} ${y0}V${y1}`;
  s += `<path d="${grid}" stroke="#c6cadc" stroke-width="1.5" fill="none"/>`;
  s += `<g clip-path="url(#c${id})"><polygon points="${x0},${base} ${pts(c.line)} ${x1},${base}" fill="url(#${id})" opacity="${c.opacity || 1}"/>`;
  s += `<path d="${grid}" stroke="#335" stroke-opacity=".06" stroke-width="1.5" fill="none"/>`;
  s += `<polyline points="${pts(c.line)}" fill="none" stroke="#484848" stroke-width="${c.lw || 4}" stroke-linejoin="round"/></g>`;
  let t = '', m = '';
  const minor = c.step / c.div;
  for (let x = c.major - Math.floor((c.major - x0) / minor) * minor, k; x <= x1; x += minor) {
    k = Math.abs((x - c.major) / c.step - Math.round((x - c.major) / c.step)) < 0.01;
    if (k) m += `M${x} ${y1}v9`; else t += `M${x} ${y1}v6`;
  }
  c.y.forEach(([y]) => m += `M${x0} ${y}h-8`);
  s += `<path d="${t}${m}" stroke="${ax}" stroke-width="1.500"/><path d="M${x0} ${y0}V${y1}" stroke="${ax}" stroke-width="2"/><path d="M${x0} ${y1 + 1}H${x1}" stroke="${ax}" stroke-width="2.500"/>`;
  c.y.forEach(([y, l]) => { if (l) s += `<text x="${x0 - 11}" y="${y + (c.ly || 5)}" text-anchor="end" fill="${c.label || ax}">${l}</text>`; });
  return s;
}

const RED = [[0, '#d65a62'], [.4, '#c3646f'], [1, '#a5788b']];
const ROSE = [[0, '#c0656f'], [1, '#8f869f']];
const BLUE = [[0, '#6eaac8'], [.15, '#6aa8c6'], [1, '#3c3f41']];
const FIRE = [[0, '#e6e044'], [.5, '#e3dd40'], [.85, '#ec9440'], [1, '#ef7b42']];
const small = (x, y, o) => ({ box: [x, y, 299, 160], plot: [x + 61, y + 5, x + 295, y + 148], major: x + 65, step: 65.5, div: 5, ...o });

const charts = {
  waterIn: small(483, 118, { y: [[148, '40,0'], [183.5, '37,5'], [219, '35,0'], [255]], gy: 194, fill: RED,
    line: drift([[544, 192], [600, 195.5], [680, 198.5], [700, 197], [778, 197.500]], 1.5, 6) }),
  waterOut: small(798, 118, { y: [[153, '37,5'], [189, '35,0'], [225, '32,5'], [261]], gy: 194, fill: ROSE,
    line: drift([[859, 192], [910, 196], [980, 197.500], [1093, 196.500]], 1.2, 6) }),
  airInTop: small(483, 366, { y: [[371], [407, '30,0'], [442.5, '27,5'], [478.5, '25,0']], gy: 444, fill: [[0, '#7f9db5'], [.45, '#6aa9c8'], [1, '#5f98b3']],
    line: scaled('202,1183 210,1190 218,1183 225,1187 232,1180 240,1187 248,1180 255,1168 262,1180 270,1190 276,1172 284,1168 296,1185 308,1190 320,1190 335,1180 344,1165 350,1183 360,1172 368,1178 382,1177 390,1190 405,1183 428,1183 440,1192 450,1180 458,1190 467,1183 475,1170 485,1190 497,1195 515,1195 540,1192 553,1185 562,1195 576,1185 590,1192 602,1178 610,1190 620,1180 650,1183 665,1187 675,1187 683,1197 700,1188 712,1185 725,1190 735,1180 748,1180 755,1197', 2.376, 3, 460, 50) }),
  airOutTop: small(798, 366, { y: [[379], [414.5, '37,5'], [450.5, '35,0'], [486.5, '32,5']], gy: 442, fill: [[0, '#cb5f69'], [1, '#99819a']],
    line: drift([[859, 438], [910, 442], [930, 442], [1000, 445], [1093, 443]], 2, 5) }),
  airInSide: small(483, 613, { y: [[647.5, '27,5'], [683.5, '25,0'], [719.5, '22,5'], [756]], gy: 690, fill: [[0, '#6ba8c6'], [1, '#5a8699']],
    line: scaled('202,450 208,447 217,425 226,442 232,448 242,440 260,446 275,452 291,438 300,457 318,445 328,442 337,458 360,442 374,453 381,428 390,427 397,433 405,430 415,448 430,453 445,450 465,458 478,450 492,470 503,463 515,474 528,460 545,458 554,468 575,462 590,455 600,470 612,458 625,470 640,457 648,468 656,455 666,472 688,450 702,470 722,462 735,455 748,463 755,455', 2.376, 3, 460, 540) }),
  airOutSide: small(798, 613, { y: [[646, '37,5'], [682, '35,0'], [718, '32,5'], [754]], gy: 690, fill: ROSE,
    line: drift([[859, 687.500], [910, 690.500], [925, 689], [970, 692], [1093, 691]], 1.2, 6) }),
  dtwa: { box: [1660, 367, 299, 187], plot: [1714, 379, 1867, 540], major: 1717.500, step: 42.500, div: 5, lw: 6,
    y: [[413, '12,5'], [454, '10,0'], [495, '7,5'], [535]], fill: [[0, '#3c4041'], [1, '#3c4041']],
    line: drift([[1714, 455], [1730, 460], [1765, 461], [1800, 456], [1867, 459]], 5, 2),
    stats: [['max', 1876, 408, '10 °C'], ['min', 1876, 451, '9 °C'], ['avg', 1875, 494, '10 °C'], ['dt', 1875, 537, '15 m']] },
  dtw: { box: [1660, 614, 299, 187], plot: [1710, 619, 1882, 787], major: 1713.500, step: 48, div: 5, lw: 5, base: 739.500,
    y: [[654, '5,0'], [697, '2,5'], [739.5, '0,0'], [782]], fill: [[0, '#3c4041'], [1, '#3c4041']],
    line: drift([[1710, 703], [1740, 702], [1800, 704], [1882, 703]], 1.5, 3),
    stats: [['max', 1891, 649, '2 °C'], ['min', 1891, 694, '2 °C'], ['avg', 1890, 738, '2 °C'], ['dt', 1890, 784, '15 m']] },
  fanTop: { box: [491, 904, 486, 312], plot: [557, 912, 966, 1204], major: 588.700, step: 45.600, div: 2, axis: '#000', lw: 5,
    y: [[911], [959.500, '1 250'], [1008.500, '1 000'], [1057.500, '750'], [1106.500, '500'], [1155, '250'], [1204]], gy: 980, fill: BLUE,
    line: [[557, 979], [590, 979.500], [860, 979.500], [966, 980]] },
  fanRight: { box: [993, 904, 486, 312], plot: [1059, 912, 1468, 1204], major: 1084.500, step: 46.200, div: 2, axis: '#000', lw: 5,
    y: [[911], [959.500, '1 250'], [1008.500, '1 000'], [1057.500, '750'], [1106.500, '500'], [1155, '250'], [1204]], gy: 980, fill: BLUE,
    line: [[1059, 980], [1068, 983], [1112, 983], [1118, 980], [1126, 983], [1150, 983], [1160, 980], [1216, 980], [1224, 983], [1252, 983], [1256, 980], [1261, 983], [1396, 983], [1397, 980], [1420, 980], [1421, 983], [1454, 983], [1455, 980], [1468, 980]] },
};
const watt = (x, o) => ({ box: [x, 900, 314, 397], plot: [x + 50, 903, x + 310, 1286], major: x + 54, step: 73.200, div: 5, axis: '#ff2a12', lw: 2.800, gy: 920, fill: FIRE, ...o });
charts.powerOut = watt(1645, { y: [[915], [968, '300'], [1021, '250'], [1074, '200'], [1127.500, '150'], [1180.500, '100'], [1233.500, '50'], [1286]],
  fill: [[0, '#e6e044'], [.6, '#e3dd40'], [.85, '#ea9a40'], [1, '#ef7b42']],
  line: scaled('103,290 108,282 113,315 118,300 123,315 128,288 137,302 142,332 147,312 152,288 156,292 162,272 170,275 175,268 181,318 186,302 190,318 195,288 200,308 205,305 210,290 215,332 220,295 225,295 229,282 235,332 239,338 244,292 252,285 258,305 265,312 270,312 275,295 280,300 290,338 296,322 301,338 306,318 312,348 320,338 325,368 330,290 338,315 345,295 349,272 355,298 365,282 370,330 376,342 381,322 392,308 397,338 402,305 410,325 418,338 430,305 435,330 441,325 446,282 450,320 455,345 457,320 460,368 461,340', 1.3754, 2.958, 1620, 830) });
charts.powerCpu = watt(1975, { y: [[951, '175'], [999, '150'], [1047, '125'], [1095, '100'], [1143, '75'], [1190.500, '50'], [1238, '25'], [1286]], lw: 4,
  fill: [[0, '#e6e044'], [.25, '#e3dd40'], [.5, '#e7bb42'], [.85, '#ee8e42'], [1, '#ef7b42']],
  line: drift([[2025, 941.500], [2095, 940.500], [2140, 941], [2150, 944], [2165, 944], [2175, 941], [2285, 941.500]], 2.500, 4) });
charts.powerGpu = watt(2305, { y: [[961.500, '200'], [1043, '150'], [1124, '100'], [1205.500, '50'], [1286]],
  fill: [[0, '#e6e044'], [.4, '#e3dd40'], [.7, '#e8ae42'], [1, '#ef7b42']],
  line: scaled('1011,228 1016,215 1021,378 1026,340 1031,245 1036,218 1046,250 1050,350 1056,550 1061,430 1066,228 1071,278 1076,258 1080,275 1085,436 1090,272 1095,408 1100,370 1105,222 1110,330 1115,256 1119,285 1124,240 1134,242 1139,232 1148,232 1153,265 1158,225 1163,240 1168,228 1173,235 1178,450 1183,400 1188,432 1194,232 1200,388 1205,330 1211,228 1216,218 1221,413 1230,320 1235,338 1240,420 1245,225 1250,232 1254,440 1259,232 1264,235 1268,422 1274,322 1279,285 1284,228 1288,230 1293,360 1298,240 1308,230 1313,280 1317,413 1322,380 1327,270 1331,218 1337,440 1342,222 1347,397 1352,262 1357,235 1361,340 1366,290 1367,448 1369,222', 1.3754, 2.958, 1620, 830) });

document.querySelectorAll('[data-chart]').forEach(el => {
  const c = charts[el.dataset.chart];
  el.setAttribute('viewBox', c.box.join(' '));
  let s = plot(c);
  (c.stats || []).forEach(([n, x, y, t]) => s += icon(n, x, y, '#000') + `<text x="${n === 'dt' ? x + 23 : x + 17}" y="${y}" class="scale">${t}</text>`);
  el.innerHTML = s;
});

// Half-moon gauges: 0..100 mapped on -60..60 degrees.
const gauges = {
  cpu: { box: [1113, 322, 531, 232], c: [1375, 625], r: 260, bands: [[0, 30, '#00f'], [30, 50, '#3f9600'], [50, 80, '#fff200'], [80, 100, '#f00']],
    mark: [77.5, 86.5], value: 83, cut: 513, left: ['100 %', 1134, 360], right: ['83 °C', 1564, 360], name: ['CPU', 1374, 498, '#b00c0c'], unit: [1375, 467],
    chart: { plot: [1261, 432, 1528, 512], major: 1266, step: 75, div: 5, axis: '#000', lw: 1.500, opacity: .82, y: [[447, '85'], [488, '80']], fill: [[0, '#ff1c1c'], [1, '#ff2a1c']],
      line: scaled('298,510 304,485 311,532 318,532 325,460 330,460 337,510 343,532 350,460 355,460 363,510 369,510 376,462 382,508 388,412 395,508 401,485 407,532 413,530 420,557 427,530 433,460 438,436 446,508 451,478 458,510 464,532 472,530 480,498 485,460 488,460 496,530 502,485 508,510 520,485 525,460 532,508 538,460 550,532 558,530 565,472 572,532 578,530 588,510 598,460 625,460 633,527 639,485 645,530 651,462 657,530 663,508 670,530 676,510 690,530 695,460 700,460 710,498 718,532 724,460 739,462 741,532 743,532 745,460 748,530 750,460 753,530 755,460 758,530 760,460 763,530', 1.742, 2.958, 1090, 300) },
    stats: [['max', 1220, 1236, '86,0 °C', 1298], ['min', 1297, 1313, '78,0 °C', 1375], ['avg', 1374, 1391, '82,6 °C', 1453], ['dt', 1459, 1483, '15 m', 1530]], sy: 545 },
  gpu: { box: [1113, 569, 531, 232], c: [1378.500, 868], r: 255, bands: [[0, 25, '#00f'], [25, 40, '#3f9600'], [40, 70, '#fff200'], [70, 89, '#f00'], [89, 100, '#000']],
    mark: [41.500, 44.500], value: 43, cut: 768, left: ['100 %', 1134, 607], right: ['43 °C', 1571, 614], name: ['GPU', 1379, 753, '#a8a000'], unit: [1380, 722],
    chart: { plot: [1275, 672, 1521, 759], major: 1282, step: 68.300, div: 5, axis: '#000', lw: 1.500, opacity: .82, y: [[693, '45'], [738, '40']], fill: [[0, '#f6ea10'], [1, '#dfe41c']],
      line: scaled('323,1190 333,1244 338,1217 360,1217 369,1242 374,1220 382,1244 392,1244 399,1217 430,1217 438,1244 448,1217 460,1217 469,1244 478,1217 486,1244 495,1220 505,1217 515,1217 525,1244 536,1244 543,1217 633,1217 643,1244 655,1244 661,1217 668,1244 674,1217 696,1217 705,1244 712,1217 718,1217 720,1244 722,1217 725,1217 728,1244 730,1217 733,1244 735,1217 738,1244 740,1217 744,1244 746,1270 748,1217 750,1217', 1.742, 2.958, 1090, 300) },
    stats: [['max', 1233, 1248, '44,0 °C', 1307], ['min', 1304, 1320, '41,0 °C', 1377], ['avg', 1375, 1391, '42,7 °C', 1450], ['dt', 1454, 1478, '15 m', 1525]], sy: 792 },
};
document.querySelectorAll('[data-gauge]').forEach(el => {
  const key = el.dataset.gauge, g = gauges[key], [cx, cy] = g.c;
  const at = (v, r) => { const a = (v * 1.2 - 60) * Math.PI / 180; return `${(cx + r * Math.sin(a)).toFixed(2)} ${(cy - r * Math.cos(a)).toFixed(2)}`; };
  const band = (a, b, r, w, col) => `<path d="M${at(a, r)}A${r} ${r} 0 0 1 ${at(b, r)}" fill="none" stroke="${col}" stroke-width="${w}"/>`;
  let s = '';
  g.bands.forEach(([a, b, col]) => s += band(a, b, g.r - 6, 12, col));
  for (let v = 0; v <= 100; v += 5) s += `<path d="M${at(v, g.r)}L${at(v, g.r + (v % 10 ? 6 : 12))}" stroke="#222" stroke-width="1.500"/>`;
  for (let v = 0; v <= 100; v += 10) s += `<text class="scale" text-anchor="middle" y="6" transform="translate(${at(v, g.r + 26).replace(' ', ',')}) rotate(${v * 1.2 - 60})">${v}</text>`;
  s += band(g.mark[0], g.mark[1], g.r - 23, 9, '#00f');
  s += `<text x="${g.unit[0]}" y="${g.unit[1]}" text-anchor="middle" fill="#222">°C</text>`;
  const needle = `<polygon points="${cx - 7},${cy} ${cx - 1.500},${cy - g.r + 12} ${cx + 1.500},${cy - g.r + 12} ${cx + 7},${cy}" fill="#f00" transform="rotate(${g.value * 1.2 - 60} ${cx} ${cy})"/>`;
  s += `<clipPath id="n-${key}"><rect x="${g.box[0]}" y="${g.box[1]}" width="531" height="${g.cut - g.box[1]}"/></clipPath>`;
  s += `<g clip-path="url(#n-${key})">${needle}</g>`;
  s += plot(g.chart);
  s += `<g clip-path="url(#n-${key})" opacity="${g.value > 50 ? .9 : .35}">${needle}</g>`;
  s += `<text x="${g.name[1]}" y="${g.name[2]}" text-anchor="middle" fill="${g.name[3]}">${g.name[0]}</text>`;
  g.stats.forEach(([n, ix, tx, t, end]) => {
    s += icon(n, ix, g.sy, '#f00') + `<clipPath id="${key}-${n}"><rect x="${tx - 2}" y="${g.sy - 24}" width="${end - tx + 2}" height="34"/></clipPath><text clip-path="url(#${key}-${n})" x="${tx}" y="${g.sy}" fill="#f00">${t}</text>`;
  });
  s += `<text class="big" x="${g.left[1]}" y="${g.left[2]}">${g.left[0]}</text><text class="big" x="${g.right[1]}" y="${g.right[2]}">${g.right[0]}</text>`;
  el.setAttribute('viewBox', g.box.join(' '));
  el.innerHTML = s;
});

document.querySelectorAll('.stats [data-i]').forEach(el => {
  const n = el.dataset.i;
  el.insertAdjacentHTML('afterbegin', n === 'dt' ? '<em>Δ<sup>t</sup></em>' : `<svg viewBox="0 0 10 14"><use href="#i-${n}"/></svg>`);
});

// Stability test scopes.
const net = (x0, x1, y0, top, y1, dy) => {
  let d = '';
  for (let x = x1; x >= x0; x -= 10) d += `M${x} ${top}V${y1}`;
  for (let y = y1; y >= y0; y -= dy) d += `M${x0} ${y}H${x1}`;
  return `<path d="${d}" stroke="#008000" stroke-width="1" fill="none"/>`;
};
const trace = (a, col, w) => `<polyline points="${pts(a)}" fill="none" stroke="${col}" stroke-width="${w}"/>`;
document.getElementById('temps').innerHTML = net(2777.5, 3717.5, 1616, 1611, 1696.5, 8) +
  trace(drift([[2777, 1630], [3225, 1626], [3718, 1633]], 8, 3), '#0f0', 1) +
  trace(drift([[2777, 1632], [3225, 1628], [3718, 1634]], 6, 4), '#0ff', 1) +
  trace(drift([[2777, 1629], [2950, 1625], [3200, 1625], [3260, 1630], [3718, 1632]], 9, 3), '#f3f', 1.500) +
  trace(drift([[2777, 1634], [3218, 1631], [3222, 1645], [3226, 1632], [3718, 1634]], 2, 10), '#a9c0e0', 2) +
  trace(drift([[2777, 1628], [3000, 1625], [3230, 1628], [3718, 1631]], 1, 12), '#c5d8b8', 1.500) +
  trace([[2777, 1654.500], [3100, 1654.500], [3100, 1653.500], [3243, 1653.500], [3243, 1652.500], [3333, 1652.500], [3333, 1651.500], [3718, 1651.500]], '#ffc878', 1.500) +
  trace([[2777, 1667.500], [2912, 1667.500], [2912, 1666.500], [3238, 1665.500], [3238, 1664.500], [3348, 1664.500], [3348, 1663.500], [3528, 1663.500], [3528, 1662.500], [3718, 1662.500]], '#ff0', 1.500) +
  '<path d="M3222 1611V1696" stroke="#fff" stroke-dasharray="5 3"/>' +
  '<g fill="#fff"><text x="2770" y="1618" text-anchor="end">100 °C</text><text x="2770" y="1703" text-anchor="end">0 °C</text><text x="3222" y="1720" text-anchor="end">2:01:28</text></g>' +
  '<text x="3722" y="1641" fill="#a9c0e0">73</text><text x="3743" y="1640" fill="#0ff">75</text><text x="3743" y="1637" fill="#f3f">80</text><text x="3743" y="1659" fill="#ffc878">54</text><text x="3722" y="1670" fill="#ff0">41</text>';
document.getElementById('usage').innerHTML = net(2736.5, 3717.5, 1792, 1792, 1910.5, 11) +
  '<path d="M2738 1792.500H3718" stroke="#ff0" stroke-width="1.500"/><path d="M2738 1910.500H3718" stroke="#0f0" stroke-width="2"/>' +
  '<g fill="#fff"><text x="2730" y="1799" text-anchor="end">100%</text><text x="2730" y="1917" text-anchor="end">0%</text></g>' +
  '<text x="3722" y="1799" fill="#ff0">100%</text><text x="3722" y="1917" fill="#0f0">0%</text>';
```
